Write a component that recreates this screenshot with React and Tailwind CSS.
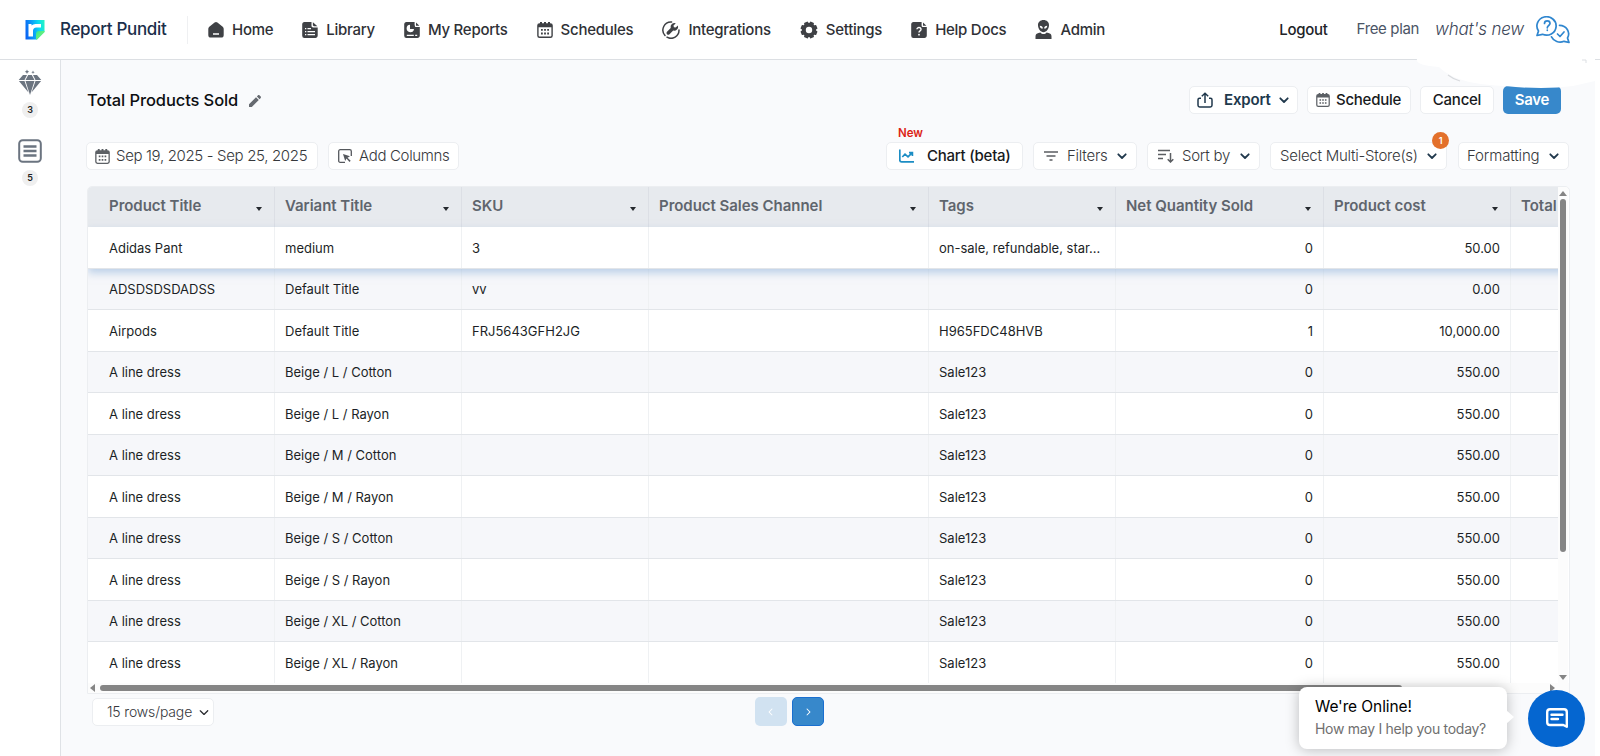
import React from "react";
import { FaChevronDown } from "react-icons/fa6";

const navItems = [
  { label: "Home", icon: "home" },
  { label: "Library", icon: "library" },
  { label: "My Reports", icon: "reports" },
  { label: "Schedules", icon: "calendar" },
  { label: "Integrations", icon: "integrations" },
  { label: "Settings", icon: "settings" },
  { label: "Help Docs", icon: "help" },
  { label: "Admin", icon: "admin" },
];

const columns = [
  { label: "Product Title", width: "w-[187px] pl-[21px]" },
  { label: "Variant Title", width: "w-[187px] pl-2.5" },
  { label: "SKU", width: "w-[187px] pl-2.5" },
  { label: "Product Sales Channel", width: "w-[280px] pl-2.5" },
  { label: "Tags", width: "w-[187px] pl-2.5" },
  { label: "Net Quantity Sold", width: "w-[208px] pl-2.5", right: true },
  { label: "Product cost", width: "w-[187px] pl-2.5", right: true },
  { label: "Total", width: "w-[187px] pl-2.5" },
];

const rows = [
  ["Adidas Pant", "medium", "3", "", "on-sale, refundable, star...", "0", "50.00", ""],
  ["ADSDSDSDADSS", "Default Title", "vv", "", "", "0", "0.00", ""],
  ["Airpods", "Default Title", "FRJ5643GFH2JG", "", "H965FDC48HVB", "1", "10,000.00", ""],
  ["A line dress", "Beige / L / Cotton", "", "", "Sale123", "0", "550.00", ""],
  ["A line dress", "Beige / L / Rayon", "", "", "Sale123", "0", "550.00", ""],
  ["A line dress", "Beige / M / Cotton", "", "", "Sale123", "0", "550.00", ""],
  ["A line dress", "Beige / M / Rayon", "", "", "Sale123", "0", "550.00", ""],
  ["A line dress", "Beige / S / Cotton", "", "", "Sale123", "0", "550.00", ""],
  ["A line dress", "Beige / S / Rayon", "", "", "Sale123", "0", "550.00", ""],
  ["A line dress", "Beige / XL / Cotton", "", "", "Sale123", "0", "550.00", ""],
  ["A line dress", "Beige / XL / Rayon", "", "", "Sale123", "0", "550.00", ""],
];

const CalendarIcon = ({ className }) => (
  <svg viewBox="0 0 16 16" className={className} fill="currentColor">
    <path
      fillRule="evenodd"
      d="M3 0h2v1.2h2V0h2v1.2h2V0h2v1.2h.5A2.3 2.3 0 0 1 15.8 3.5v10A2.4 2.4 0 0 1 13.4 16H2.6A2.4 2.4 0 0 1 .2 13.5v-10A2.3 2.3 0 0 1 2.5 1.2H3zM1.6 5.2v8.2c0 .7.5 1.2 1.2 1.2h10.4c.7 0 1.2-.5 1.2-1.2V5.2z"
    />
    <path d="M4 7h1.8v1.8H4zM7.1 7h1.8v1.8H7.1zM10.2 7H12v1.8h-1.8zM4 10.6h1.8v1.8H4zM7.1 10.6h1.8v1.8H7.1zM10.2 10.6H12v1.8h-1.8z" />
  </svg>
);

const NavIcon = ({ name }) => {
  const cls = "w-4 h-4 shrink-0 text-[#3f4145]";
  switch (name) {
    case "home":
      return (
        <svg viewBox="0 0 16 16" className={cls} fill="currentColor">
          <path
            fillRule="evenodd"
            d="M6.6.6a2.2 2.2 0 0 1 2.8 0l5.3 4.2c.6.5 1 1.2 1 2V13a2.6 2.6 0 0 1-2.6 2.6H2.9A2.6 2.6 0 0 1 .3 13V6.8c0-.8.4-1.5 1-2zM5 11.2v1.5h6v-1.5z"
          />
        </svg>
      );
    case "library":
      return (
        <svg viewBox="0 0 16 16" className={cls} fill="currentColor">
          <path
            fillRule="evenodd"
            d="M2.4 0H9.5v3.8c0 1 .7 1.7 1.7 1.7h4.5v8.1c0 1.3-1 2.4-2.3 2.4h-11A2.3 2.3 0 0 1 .2 13.7V2.3C.2 1 1.1 0 2.4 0zM3 6v1.3h1.3V6zm2.5 0v1.3H9V6zM3 9v1.2h1.3V9zm2.5 0v1.2H13V9zM3 12v1.2h1.3V12zm2.5 0v1.2H13V12z"
          />
          <path d="M10.9.2 15.4 4.2h-3.3c-.7 0-1.2-.5-1.2-1.2z" />
        </svg>
      );
    case "reports":
      return (
        <svg viewBox="0 0 16 16" className={cls} fill="currentColor">
          <path
            fillRule="evenodd"
            d="M2.4 0h8.2v3.4c0 1 .6 1.6 1.6 1.6h3.6v8.6c0 1.3-1 2.4-2.4 2.4h-11A2.3 2.3 0 0 1 .2 13.7V2.3C.2 1 1.1 0 2.4 0zM6 2.8a3.7 3.7 0 1 0 4 4.2H6zM2.8 12.8V14h7v-1.2zm8.4 0V14h2v-1.2z"
          />
          <path d="M7.2 1.8A4 4 0 0 1 11 5.7H7.2z" />
          <path d="M12 .4 15.4 3.7H12z" />
        </svg>
      );
    case "calendar":
      return <CalendarIcon className={cls} />;
    case "integrations":
      return (
        <svg viewBox="0 0 18 18" className="w-[18px] h-[18px] shrink-0 text-[#3f4145]">
          <path
            d="M9.6 1A8.1 8.1 0 0 0 3 14.5M17 9A8 8 0 0 1 5 16.2"
            fill="none"
            stroke="currentColor"
            strokeWidth="1.5"
            strokeLinecap="round"
          />
          <path
            d="M16 4.6 13.6 6.6l-1.7-.4-.4-1.7L13.8 2.2A4 4 0 0 0 8.7 7L5 10.7a1.7 1.7 0 0 0 2.5 2.5l3.7-3.7A4 4 0 0 0 16 4.6z"
            fill="currentColor"
          />
        </svg>
      );
    case "settings":
      return (
        <svg viewBox="0 0 18 18" className="w-[18px] h-[18px] shrink-0 text-[#3f4145]">
          <circle cx="9" cy="9" r="5.2" fill="none" stroke="currentColor" strokeWidth="4" />
          <g fill="currentColor">
            {[0, 45, 90, 135, 180, 225, 270, 315].map((a) => (
              <rect
                key={a}
                x="6.9"
                y="0.5"
                width="4.2"
                height="3.5"
                rx="0.8"
                transform={`rotate(${a + 22.5} 9 9)`}
              />
            ))}
          </g>
        </svg>
      );
    case "help":
      return (
        <svg viewBox="0 0 16 16" className={cls}>
          <path
            fill="currentColor"
            d="M2.4 0h8.2v3.4c0 1 .6 1.6 1.6 1.6h3.6v8.6c0 1.3-1 2.4-2.4 2.4h-11A2.3 2.3 0 0 1 .2 13.7V2.3C.2 1 1.1 0 2.4 0zM12 .4 15.4 3.7H12z"
          />
          <path
            d="M6 7.3C6 4.9 10 5 10 7.4 10 9 8 8.8 8 10.6"
            fill="none"
            stroke="white"
            strokeWidth="1.4"
          />
          <circle cx="8" cy="12.7" r="0.9" fill="white" />
        </svg>
      );
    default:
      return (
        <svg viewBox="0 0 17 19" className="w-[17px] h-[19px] shrink-0 text-[#3f4145]">
          <path
            fill="currentColor"
            d="M8.5 0C5.2 0 3 2.2 3 5.2c0 3.3 2.6 7 5.5 7s5.5-3.7 5.5-7C14 2.2 11.8 0 8.5 0zM.5 19v-2.5c0-2 1.2-3 3-3.4l1.9-.6c1.7 2 4.5 2 6.2 0l1.9.6c1.8.4 3 1.4 3 3.4V19z"
          />
          <path
            fill="white"
            d="M4.8 5.8c2 0 3 1 3.1 2.8-2 .2-3.1-.9-3.1-2.8zM12.2 5.8c-2 0-3 1-3.1 2.8 2 .2 3.1-.9 3.1-2.8z"
          />
        </svg>
      );
  }
};

const Logo = () => (
  <svg viewBox="0 0 20 20" className="h-5 w-5 shrink-0">
    <defs>
      <linearGradient id="logo" x1="0" y1="0.6" x2="1" y2="0.4">
        <stop offset="0" stopColor="#0b63f3" />
        <stop offset="0.4" stopColor="#0a9df8" />
        <stop offset="0.75" stopColor="#08dcf2" />
        <stop offset="1" stopColor="#22f0c8" />
      </linearGradient>
      <linearGradient id="fold" x1="0" y1="0" x2="1" y2="1">
        <stop offset="0" stopColor="#2ee59a" />
        <stop offset="1" stopColor="#9bf75e" />
      </linearGradient>
    </defs>
    <path d="M.5 0h19v12L12 19.500H.5z" fill="url(#logo)" />
    <path d="M11 19.500V14q0-3 3-3h5.500v1L12 19.500z" fill="url(#fold)" />
    <path d="M3.500 4h3v1.500Q8 4 10.500 4H16v3.500h-4.500Q8 7.500 8 11v5.500H3.500z" fill="white" />
  </svg>
);

const Caret = () => (
  <svg viewBox="0 0 10 7" className="h-[7px] w-2.5 shrink-0" fill="none" stroke="#20384c" strokeWidth="1.8">
    <path d="M1.300 1.300 5 5l3.700-3.700" strokeLinecap="round" strokeLinejoin="round" />
  </svg>
);

const Pill = ({ children, className = "" }) => (
  <div
    className={`relative flex h-7 items-center rounded-[5px] border border-[#eceef1] bg-white text-[15px] tracking-[-0.25px] whitespace-nowrap text-[#36383c] ${className}`}
  >
    {children}
  </div>
);

const Header = () => (
  <header className="flex h-[60px] shrink-0 items-center border-b border-[#dcdfe3] bg-white">
    <div className="flex w-[187px] items-center pl-[25px]">
      <Logo />
      <span className="ml-[15px] text-[17px] font-medium tracking-[-0.33px] whitespace-nowrap text-[#1b2f4b]">
        Report Pundit
      </span>
    </div>
    <div className="h-7 w-px bg-[#eff0f2]" />
    <nav className="ml-5 flex items-center gap-[29px]">
      {navItems.map((item) => (
        <div key={item.label} className="flex items-center gap-2">
          <NavIcon name={item.icon} />
          <span className="pt-0.5 text-[15px] font-medium tracking-[-0.26px] whitespace-nowrap text-[#2f3136]">
            {item.label}
          </span>
        </div>
      ))}
    </nav>
    <div className="ml-auto flex items-center pr-[30px] whitespace-nowrap">
      <span className="pt-0.5 text-[15px] font-medium tracking-[-0.27px] text-[#212327]">
        Logout
      </span>
      <span className="ml-[29px] text-[15px] tracking-[-0.35px] text-[#4b5566]">Free plan</span>
      <span className="ml-4 text-[17px] font-light tracking-[-0.2px] text-[#3d475a] italic">
        what's new
      </span>
      <svg
        viewBox="0 0 34 28"
        className="ml-3 h-7 w-[34px]"
        fill="none"
        stroke="#2f86cf"
        strokeWidth="1.7"
        strokeLinejoin="round"
        strokeLinecap="round"
      >
        <path d="M1 19.5 2.5 15A9.6 9.2 0 1 1 6.5 18.3z" />
        <path d="M23.5 9.3a9 8.6 0 0 1 8 12.7l1.5 4.5-5-1.2a9.5 9 0 0 1-12.5-4.5" />
        <path d="M8.5 7.5c0-3.5 5.5-3.5 5.5 0 0 2-2.7 2-2.7 4.3M11.3 14v.3M21.5 18l2.500 2.500 4-4.500" />
      </svg>
    </div>
  </header>
);

const Sidebar = () => (
  <aside className="flex w-[61px] shrink-0 flex-col items-center border-r border-[#dfe2e6] bg-white">
    <svg viewBox="0 0 24 26" className="mt-[9px] h-[27px] w-6" fill="#6b7480">
      <path d="M9 0l.7 1.5 1.5.7-1.5.7L9 4.5l-.7-1.6-1.5-.7 1.5-.7zM15 1l.5 1.2 1.2.5-1.2.5L15 4.4l-.5-1.2-1.2-.5 1.2-.5z" />
      <path d="M5 5.5h4L6.5 10.5H.7zM10.2 5.5h3.6L16.5 10.5h-9zM15 5.5h4l4.3 5h-5.8zM.9 11.5h5.6L10.5 23zM7.5 11.5h9L12 25.5zM17.5 11.5h5.6L13.5 23z" />
    </svg>
    <span className="mt-1.5 flex h-4 w-4 items-center justify-center rounded-full bg-[#efefef] text-[9px] font-semibold text-[#222]">
      3
    </span>
    <svg viewBox="0 0 24 24" className="mt-[21px] h-6 w-6" fill="none" stroke="#6b7480" strokeWidth="2">
      <rect x="1.2" y="1.2" width="21.6" height="21.6" rx="3.5" />
      <path d="M5.5 7.500h13M5.500 12h13M5.500 16.500h13" strokeWidth="2.4" />
    </svg>
    <span className="mt-[7px] flex h-4 w-4 items-center justify-center rounded-full bg-[#efefef] text-[9px] font-semibold text-[#222]">
      5
    </span>
  </aside>
);

const TitleBar = () => (
  <div className="flex h-7 items-center">
    <h1 className="pt-px text-[16.5px] font-medium tracking-[-0.1px] text-[#0d0f12]">
      Total Products Sold
    </h1>
    <svg viewBox="0 0 12 12" className="mt-0.5 ml-[11px] h-3 w-3" fill="#666a70">
      <path d="M0 12v-2.8L7 2.2 9.8 5l-7 7zM7.9 1.4 9 .3c.4-.4 1-.4 1.4 0l1.3 1.3c.4.4.4 1 0 1.4l-1.1 1.2z" />
    </svg>
    <div className="mr-[34px] ml-auto flex items-center">
      <Pill className="w-[109px] pl-[7px]">
        <svg viewBox="0 0 16 16" className="h-4 w-4" fill="none" stroke="#20384c" strokeWidth="1.5">
          <path d="M4 6.2H2.5Q1 6.2 1 7.7v5.6Q1 15 2.7 15h10.6q1.7 0 1.7-1.7V7.7q0-1.5-1.5-1.5H12M8 11V1.2M4.8 4.3 8 1.2l3.2 3.1" />
        </svg>
        <span className="mr-2 ml-[11px] pt-px font-semibold tracking-[-0.15px] text-[#20384c]">
          Export
        </span>
        <Caret />
      </Pill>
      <Pill className="ml-[9px] w-[104px] pl-2">
        <CalendarIcon className="h-3.5 w-3.5 text-[#5c6065]" />
        <span className="ml-1.5 font-medium text-[#17191c]">Schedule</span>
      </Pill>
      <Pill className="ml-[9px] w-[74px] justify-center">
        <span className="font-medium text-[#17191c]">Cancel</span>
      </Pill>
      <div className="ml-[9px] flex h-7 w-[58px] items-center justify-center rounded-[5px] bg-[#3788cb] text-[15px] font-semibold tracking-[-0.3px] text-white">
        Save
      </div>
    </div>
  </div>
);

const Toolbar = () => (
  <div className="mt-7 flex h-7 items-center">
    <Pill className="-ml-px w-[232px] pl-2 font-light">
      <CalendarIcon className="mr-1.5 h-[15px] w-[15px] shrink-0 text-[#5c6065]" />
      <span className="tracking-[-0.34px]">Sep 19, 2025 - Sep 25, 2025</span>
    </Pill>
    <Pill className="ml-2.5 w-[131px] pl-[9px] font-light">
      <svg viewBox="0 0 14 14" className="h-3.5 w-3.5" fill="none" stroke="#55585d" strokeWidth="1.3">
        <path d="M7 13.3H2.3Q.7 13.3.7 11.7V2.3Q.7.7 2.3.7h9.4q1.6 0 1.6 1.6V7" />
        <path d="m5 5 2.2 7 1.3-2.5L11.5 13l1.2-1.2-3.2-3L12 7.3z" fill="#55585d" stroke="none" />
      </svg>
      <span className="ml-[7px] tracking-[-0.33px]">Add Columns</span>
    </Pill>
    <div className="mr-[26px] ml-auto flex items-center">
      <Pill className="w-[137px] pl-3">
        <span className="absolute -top-[18px] left-[11px] text-[11.5px] leading-4 font-semibold tracking-normal text-[#dc1f16]">
          New
        </span>
        <svg viewBox="0 0 15 14" className="h-3.5 w-[15px]" fill="none" stroke="#1c8dc4" strokeWidth="1.7">
          <path d="M.8.5V11q0 1.8 1.8 1.8H15M3.3 8 6 5.2l3 2.6 4-4M10 3.6h3.4V7" />
        </svg>
        <span className="ml-[13px] font-medium text-[#17191c]">Chart (beta)</span>
      </Pill>
      <Pill className="ml-2.5 w-[104px] pl-2.5 font-light">
        <svg viewBox="0 0 14 10" className="h-2.5 w-3.5" stroke="#5b5e62" strokeWidth="1.5">
          <path d="M0 1h14M2.5 5h9M5.5 9h3" />
        </svg>
        <span className="mr-[9px] ml-[9px]">Filters</span>
        <Caret />
      </Pill>
      <Pill className="ml-2.5 w-[113px] pl-2.5 font-light">
        <svg viewBox="0 0 16 14" className="h-3.5 w-4" fill="none" stroke="#5b5e62" strokeWidth="1.5">
          <path d="M0 1.5h12M0 5.5h8M0 9.5h5M12.5 4v9M9.7 10.2l2.8 2.8 2.8-2.8" />
        </svg>
        <span className="mr-2.5 ml-2">Sort by</span>
        <Caret />
      </Pill>
      <Pill className="ml-2.5 w-[177px] pl-[9px] font-light">
        <span className="mr-[9px]">Select Multi-Store(s)</span>
        <Caret />
        <span className="absolute -top-[11px] -right-[3px] flex h-[17px] w-[17px] items-center justify-center rounded-full bg-[#e3702b] text-[9px] font-semibold text-white">
          1
        </span>
      </Pill>
      <Pill className="ml-[11px] w-[111px] pl-2 font-light">
        <span className="mr-2.5 tracking-[-0.15px]">Formatting</span>
        <Caret />
      </Pill>
    </div>
  </div>
);

const Table = () => (
  <div className="mt-4 flex h-[508px] w-[1483px] flex-col overflow-hidden rounded-t-[5px] border border-[#eceef1] bg-white">
    <div className="flex h-[496px]">
      <div className="w-[1470px] shrink-0 overflow-hidden">
        <div className="flex h-10 w-[1610px] bg-[#e7eaee]">
          {columns.map((col) => (
            <div
              key={col.label}
              className={`flex shrink-0 items-center justify-between border-r border-[#dcdfe5] pr-3 pb-0.5 ${col.width}`}
            >
              <span className="text-[15px] font-semibold tracking-[-0.03px] whitespace-nowrap text-[#5f656d]">
                {col.label}
              </span>
              <span className="mt-1.5 h-0 w-0 border-x-[3.5px] border-t-4 border-x-transparent border-t-[#25292e]" />
            </div>
          ))}
        </div>
        {rows.map((row, i) => (
          <div
            key={i}
            className={`flex h-[41.55px] w-[1610px] border-b border-[#e2e5e9] text-[13px] text-[#1c1f26] ${
              i % 2 ? "bg-[#f6f7fa]" : "bg-white"
            } ${i === 0 ? "relative shadow-[0_4px_8px_rgba(130,170,215,0.5)]" : ""}`}
          >
            {row.map((cell, j) => (
              <div
                key={j}
                className={`flex shrink-0 items-center border-r border-[#eff1f3] pt-0.5 pr-2.5 whitespace-nowrap ${columns[j].width} ${
                  columns[j].right ? "justify-end" : ""
                }`}
              >
                {cell}
              </div>
            ))}
          </div>
        ))}
      </div>
      <div className="flex w-[10px] flex-col items-center bg-[#fcfcfc] pt-1">
        <span className="h-0 w-0 border-x-4 border-b-[5px] border-x-transparent border-b-[#858585]" />
        <span className="mt-[3px] h-[353px] w-1.5 rounded-full bg-[#858585]" />
        <span className="mt-auto mb-[3px] h-0 w-0 border-x-4 border-t-[5px] border-x-transparent border-t-[#858585]" />
      </div>
    </div>
    <div className="flex h-2.5 items-center bg-[#fcfcfc] pl-0.5">
      <span className="h-0 w-0 border-y-4 border-r-[5px] border-y-transparent border-r-[#858585]" />
      <span className="ml-[5px] h-1.5 w-[1302px] rounded-full bg-[#858585]" />
      <span className="mr-[14px] ml-auto h-0 w-0 border-y-4 border-l-[5px] border-y-transparent border-l-[#858585]" />
    </div>
  </div>
);

const Footer = () => (
  <div className="mt-[3px] flex items-center pl-[5px]">
    <Pill className="w-[122px] pl-3.5 font-light">
      <span className="w-[92px] text-[14px] tracking-[-0.15px]">15 rows/page</span>
      <FaChevronDown className="h-2.5 w-2.5 shrink-0 text-[#2a2c30]" />
    </Pill>
    <div className="ml-[541px] flex gap-[5px]">
      <div className="flex h-[29px] w-8 items-center justify-center rounded-[5px] bg-[#d1e2f1]">
        <FaChevronDown className="h-2 w-2 rotate-90 text-white" />
      </div>
      <div className="flex h-[29px] w-8 items-center justify-center rounded-[5px] border border-[#1a6fd0] bg-[#3788cb]">
        <FaChevronDown className="h-2 w-2 -rotate-90 text-white" />
      </div>
    </div>
  </div>
);

// floats over the bottom right corner
const ChatWidget = () => (
  <div className="absolute right-[15px] bottom-[7px] flex items-center">
    <div className="relative mr-[21px] h-[62px] w-[208px] rounded-[8px] bg-white pt-[9px] pl-4 shadow-[0_1px_14px_rgba(0,0,0,0.25)]">
      <p className="text-[15.5px] leading-[22px] tracking-[-0.1px] text-black">We're Online!</p>
      <p className="text-[14px] leading-[22px] tracking-[-0.28px] text-[#6f6f6f]">
        How may I help you today?
      </p>
      <span className="absolute top-[23px] -right-[7px] h-0 w-0 border-y-[7px] border-l-[8px] border-y-transparent border-l-white" />
    </div>
    <div className="flex h-[57px] w-[57px] items-center justify-center rounded-full bg-[#0566d0]">
      <svg
        viewBox="0 0 22 20"
        className="h-5 w-[22px]"
        fill="none"
        stroke="white"
        strokeWidth="2.4"
        strokeLinecap="round"
        strokeLinejoin="round"
      >
        <path d="M4 1.2h14q2.800 0 2.800 2.800v14.800l-3.500-1.800H4q-2.800 0-2.800-2.800V4q0-2.800 2.800-2.800zM5.500 6.800h11M5.500 11h6.500" />
      </svg>
    </div>
  </div>
);

const App = () => {
  return (
    <div className="relative flex h-[756px] w-[1600px] flex-col overflow-hidden bg-white font-['Inter',sans-serif]">
      <Header />
      <div className="flex min-h-0 flex-1">
        <Sidebar />
        <main className="relative w-[1534px] bg-[#f9fafc] pt-[26px] pl-[26px]">
          <svg viewBox="0 0 182 30" className="absolute -top-px right-0 z-10 h-[30px] w-[182px]">
            <path d="M4 0Q2 6 26 8C40 22 66 26 92 27Q130 31 160 27L182 22V0z" fill="white" />
            <path d="M35 16Q40 20 47 22" fill="none" stroke="#d9dbde" strokeWidth="1.2" />
            <path d="M169 1h4v3" fill="none" stroke="#dcdfe3" strokeWidth="1" />
          </svg>
          <TitleBar />
          <Toolbar />
          <Table />
          <Footer />
        </main>
      </div>
      <ChatWidget />
    </div>
  );
};

export default App;
